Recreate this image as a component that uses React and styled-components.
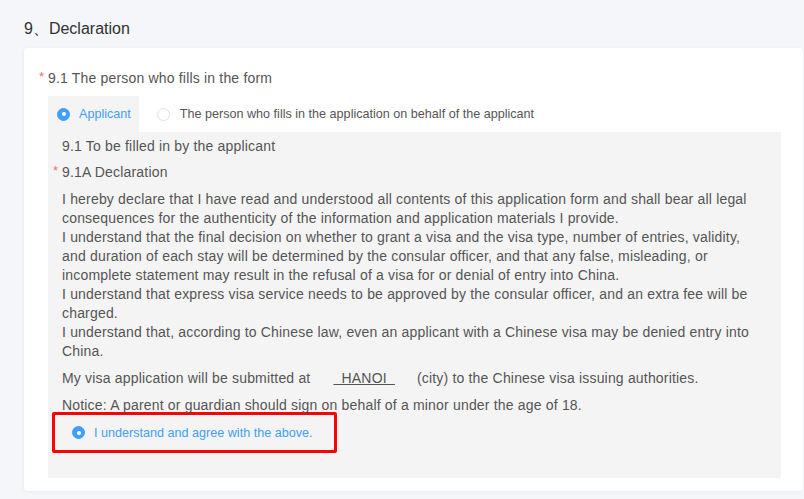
import React from 'react'
import styled, { createGlobalStyle } from 'styled-components'

const GlobalStyle = createGlobalStyle`
  html, body {
    margin: 0;
    padding: 0;
    background: #f5f6f9;
    font-family: "Liberation Sans", Arial, sans-serif;
  }
`

const Page = styled.div`
  padding: 0 0 0 24px;
  width: 804px;
  height: 499px;
  box-sizing: border-box;
  overflow: hidden;
`

const Title = styled.h2`
  margin: 0;
  padding: 19px 0 9px;
  font-size: 16px;
  line-height: 20px;
  font-weight: 400;
  color: #303133;
`

const Card = styled.div`
  width: 779px;
  background: #fff;
  border-radius: 4px;
  box-shadow: 0 1px 4px rgba(0, 0, 0, 0.06);
  padding: 20px 22px 13px 15px;
  box-sizing: border-box;
`

const Label = styled.div`
  display: flex;
  align-items: center;
  font-size: 14px;
  line-height: 20px;
  letter-spacing: 0.18px;
  color: #555;
  margin-bottom: 8px;
`

const Star = styled.span`
  color: #f56c6c;
  width: 9px;
  font-size: 13px;
  align-self: flex-start;
  line-height: 18px;
`

const Tabs = styled.div`
  display: flex;
  margin-left: 9px;
  height: 36px;
`

const Option = styled.label`
  display: flex;
  align-items: center;
  gap: ${p => (p.$active ? 9 : 10)}px;
  padding: 0 8px 0 ${p => (p.$active ? 9 : 18)}px;
  background: ${p => (p.$active ? '#f4f4f4' : 'transparent')};
  color: ${p => (p.$active ? '#409eff' : '#555')};
  font-size: 12.6px;
  cursor: pointer;
  white-space: nowrap;
`

const Dot = styled.span`
  width: 13px;
  height: 13px;
  border-radius: 50%;
  box-sizing: border-box;
  flex-shrink: 0;
  display: flex;
  align-items: center;
  justify-content: center;
  background: ${p => (p.$on ? '#409eff' : '#fff')};
  border: 1px solid ${p => (p.$on ? '#409eff' : '#dcdfe6')};

  &::after {
    content: '';
    width: 4px;
    height: 4px;
    border-radius: 50%;
    background: #fff;
    display: ${p => (p.$on ? 'block' : 'none')};
  }
`

const Panel = styled.div`
  margin-left: 9px;
  background: #f4f4f4;
  padding: 4px 14px 25px 14px;
  color: #555;
  font-size: 14px;
  letter-spacing: 0.18px;
`

const SubLabel = styled.div`
  line-height: 20px;
  margin-bottom: 6px;
`

const Decl = styled.div`
  display: flex;
  line-height: 20px;
  margin-left: -9px;
  margin-bottom: 8px;
`

const Text = styled.p`
  margin: 0 0 ${p => (p.$last ? 0 : 8)}px;
  line-height: 19px;
`

const City = styled.span`
  text-decoration: underline;
  margin: 0 22px 0 23px;
`

const Agree = styled.label`
  display: flex;
  align-items: center;
  gap: 9px;
  margin: -3px 0 0 -10px;
  width: 285px;
  height: 41px;
  box-sizing: border-box;
  border: 3px solid #ff0000;
  border-radius: 2px;
  padding-left: 17px;
  color: #409eff;
  font-size: 12.6px;
  letter-spacing: 0;
`

export default function App() {
  return (
    <Page>
      <GlobalStyle />
      <Title>9、Declaration</Title>
      <Card>
        <Label>
          <Star>*</Star>9.1 The person who fills in the form
        </Label>
        <Tabs>
          <Option $active>
            <Dot $on />Applicant
          </Option>
          <Option>
            <Dot />The person who fills in the application on behalf of the applicant
          </Option>
        </Tabs>
        <Panel>
          <SubLabel>9.1 To be filled in by the applicant</SubLabel>
          <Decl>
            <Star>*</Star>9.1A Declaration
          </Decl>
          <Text>
            I hereby declare that I have read and understood all contents of this application form and shall bear all legal consequences for the authenticity of the information and application materials I provide.
            <br />
            I understand that the final decision on whether to grant a visa and the visa type, number of entries, validity, and duration of each stay will be determined by the consular officer, and that any false, misleading, or incomplete statement may result in the refusal of a visa for or denial of entry into China.
            <br />
            I understand that express visa service needs to be approved by the consular officer, and an extra fee will be charged.
            <br />
            I understand that, according to Chinese law, even an applicant with a Chinese visa may be denied entry into China.
          </Text>
          <Text>
            My visa application will be submitted at<City>&nbsp;&nbsp;HANOI&nbsp;&nbsp;</City>(city) to the Chinese visa issuing authorities.
          </Text>
          <Text $last>Notice: A parent or guardian should sign on behalf of a minor under the age of 18.</Text>
          <Agree>
            <Dot $on />I understand and agree with the above.
          </Agree>
        </Panel>
      </Card>
    </Page>
  )
}
